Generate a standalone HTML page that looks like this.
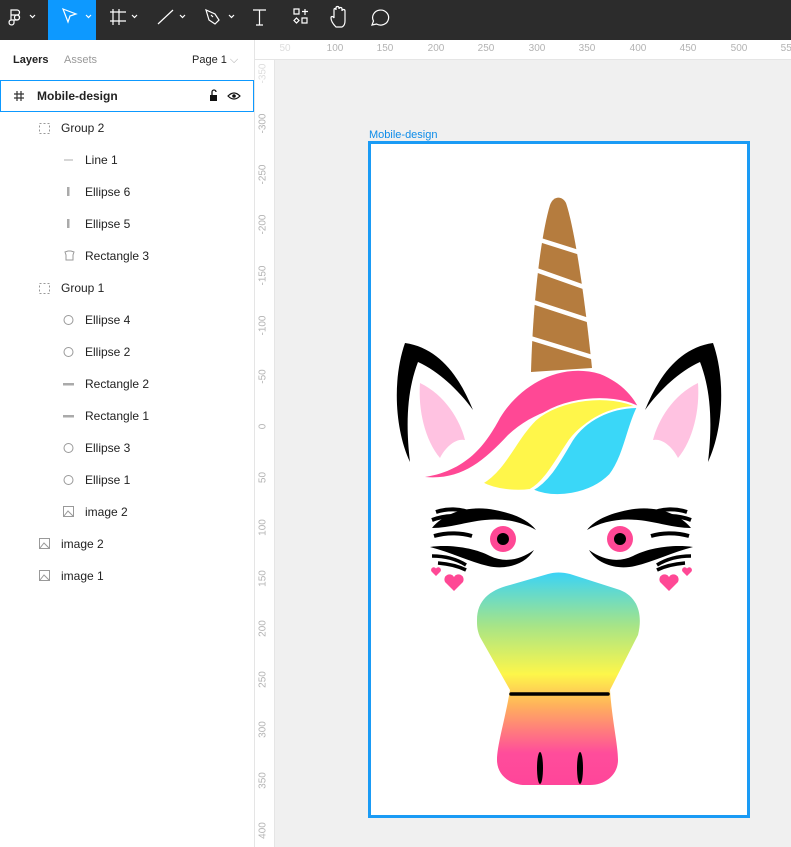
<!DOCTYPE html>
<html><head><meta charset="utf-8"><style>
*{margin:0;padding:0;box-sizing:border-box}
body{width:791px;height:847px;overflow:hidden;font-family:"Liberation Sans",sans-serif;background:#f0f0f0;position:relative}
.tb{position:absolute;left:0;top:0;width:791px;height:40px;background:#2c2c2c}
.panel{position:absolute;left:0;top:40px;width:255px;height:807px;background:#fff;border-right:1px solid #e5e5e5}
.t{position:absolute;font-size:12px;color:#222;white-space:nowrap}
.row{position:absolute;font-size:12px;color:#222;white-space:nowrap}
.hr{position:absolute;left:255px;top:40px;width:536px;height:20px;background:#fff;border-bottom:1px solid #e5e5e5}
.vr{position:absolute;left:255px;top:60px;width:20px;height:787px;background:#fff;border-right:1px solid #e5e5e5}
.hl{position:absolute;top:3px;font-size:10px;color:#b3b3b3;transform:translateX(-50%)}
.vl{position:absolute;left:2px;font-size:10px;color:#b3b3b3;transform:rotate(-90deg);transform-origin:center;width:30px;text-align:center;margin-left:-9px}
</style></head><body>
<div class="tb">
<svg width="791" height="40" style="position:absolute;left:0;top:0">
<rect x="48" y="0" width="48" height="40" fill="#0d99ff"/>
<g fill="none" stroke="#fff" stroke-width="1.2">
<path d="M11 10h6a2.5 2.5 0 0 1 0 5h-6zM11 15h6a2.5 2.5 0 0 1 0 5h-6zM11 20h3v3a2.5 2.5 0 1 1-3-3z"/>
<circle cx="17" cy="17.5" r="2.5"/>
<path d="M30 15l2.5 2.5 2.5-2.5M86 15l2.5 2.5 2.5-2.5M132 15l2.5 2.5 2.5-2.5M180 15l2.5 2.5 2.5-2.5M229 15l2.5 2.5 2.5-2.5"/>
<path d="M63 9l13 5-6 2-2 6z"/>
<path d="M113 9v16M119 9v16M110 12h16M110 21h16"/>
<path d="M158 24l15-14"/>
<path d="M206 10l3 10 6 4 4-4-4-6zM211 15l2 2"/>
<path d="M253 10h13M259.5 10v15M256 25h7"/>
<path d="M294 9h5v5h-5zM302 11.5h6M305 9v6M296.5 18l2.5 2.5-2.5 2.5-2.5-2.5zM302 18h5v5h-5z"/>
<path d="M336 27c-3-3-5-6-5-9 0-2 2-2 3 0v-8c0-2 2-2 2 0v-2c0-2 3-2 3 0v1c0-2 3-2 3 0v2c0-2 3-2 3 0v10c0 3-1 5-3 6z"/>
<path d="M372 25l1.5-4a8 7.5 0 1 1 3 3z"/>
</g>
</svg>
</div>
<div class="panel">
<div class="t" style="left:13px;top:14px;font-size:11px;font-weight:bold">Layers</div>
<div class="t" style="left:64px;top:14px;font-size:11px;color:#999">Assets</div>
<div class="t" style="left:192px;top:14px;font-size:11px">Page 1 <span style="color:#aaa">⌵</span></div>
<div style="position:absolute;left:0;top:40px;width:254px;height:32px;border:1px solid #0d99ff"></div>
</div>
<svg width="255" height="847" style="position:absolute;left:0;top:0">
<g fill="none" stroke="#333" stroke-width="1.2"><path d="M17 91v10M21 91v10M14 94h10M14 98h10"/></g>
<rect x="210" y="95" width="7" height="6" fill="#111"/><path d="M212 95v-3a2 2 0 0 1 4 0" stroke="#111" fill="none" stroke-width="1.3"/>
<path d="M228 96q6-6 12 0q-6 6-12 0z" stroke="#111" fill="none" stroke-width="1.2"/><circle cx="234" cy="96" r="1.8" fill="#111"/>
<g fill="none" stroke="#999" stroke-width="1" stroke-dasharray="2 2">
<rect x="39.5" y="123.5" width="10" height="10"/><rect x="39.5" y="283.5" width="10" height="10"/></g>
<path d="M64 160h9" stroke="#bbb" stroke-width="1.2"/>
<rect x="67" y="187" width="2.5" height="9" fill="#aaa"/><rect x="67" y="219" width="2.5" height="9" fill="#aaa"/>
<path d="M65 252l3-1h3l3 1-1 3v5h-7v-5z" fill="none" stroke="#999"/>
<g fill="none" stroke="#999"><circle cx="68.5" cy="320" r="4.5"/><circle cx="68.5" cy="352" r="4.5"/><circle cx="68.5" cy="448" r="4.5"/><circle cx="68.5" cy="480" r="4.5"/>
<rect x="63.5" y="506.5" width="10" height="10"/><rect x="39.5" y="538.5" width="10" height="10"/><rect x="39.5" y="570.5" width="10" height="10"/>
<path d="M64 516l4-5 5 5M40 548l4-5 5 5M40 580l4-5 5 5"/></g>
<rect x="63" y="383" width="11" height="2.5" fill="#aaa"/><rect x="63" y="415" width="11" height="2.5" fill="#aaa"/>
</svg>
<div class="row" style="left:37px;top:89px;font-weight:bold">Mobile-design</div>
<div class="row" style="left:61px;top:121px">Group 2</div>
<div class="row" style="left:85px;top:153px">Line 1</div>
<div class="row" style="left:85px;top:185px">Ellipse 6</div>
<div class="row" style="left:85px;top:217px">Ellipse 5</div>
<div class="row" style="left:85px;top:249px">Rectangle 3</div>
<div class="row" style="left:61px;top:281px">Group 1</div>
<div class="row" style="left:85px;top:313px">Ellipse 4</div>
<div class="row" style="left:85px;top:345px">Ellipse 2</div>
<div class="row" style="left:85px;top:377px">Rectangle 2</div>
<div class="row" style="left:85px;top:409px">Rectangle 1</div>
<div class="row" style="left:85px;top:441px">Ellipse 3</div>
<div class="row" style="left:85px;top:473px">Ellipse 1</div>
<div class="row" style="left:85px;top:505px">image 2</div>
<div class="row" style="left:61px;top:537px">image 2</div>
<div class="row" style="left:61px;top:569px">image 1</div>

<div class="hr">
<span class="hl" style="left:30px;color:#ddd">50</span><span class="hl" style="left:80px">100</span><span class="hl" style="left:130px">150</span><span class="hl" style="left:181px">200</span><span class="hl" style="left:231px">250</span><span class="hl" style="left:282px">300</span><span class="hl" style="left:332px">350</span><span class="hl" style="left:383px">400</span><span class="hl" style="left:433px">450</span><span class="hl" style="left:484px">500</span><span class="hl" style="left:534px">550</span>
</div>
<div class="vr">
<span class="vl" style="top:8px;color:#ddd">-350</span><span class="vl" style="top:58px">-300</span><span class="vl" style="top:109px">-250</span><span class="vl" style="top:159px">-200</span><span class="vl" style="top:210px">-150</span><span class="vl" style="top:260px">-100</span><span class="vl" style="top:311px">-50</span><span class="vl" style="top:361px">0</span><span class="vl" style="top:412px">50</span><span class="vl" style="top:462px">100</span><span class="vl" style="top:513px">150</span><span class="vl" style="top:563px">200</span><span class="vl" style="top:614px">250</span><span class="vl" style="top:664px">300</span><span class="vl" style="top:715px">350</span><span class="vl" style="top:765px">400</span>
</div>
<div style="position:absolute;left:369px;top:129px;font-size:11px;color:#0d8ce9">Mobile-design</div>
<div style="position:absolute;left:368px;top:141px;width:382px;height:677px;background:#fff;border:3px solid #1a9bf5"></div>
<svg width="791" height="847" style="position:absolute;left:0;top:0">
<defs><linearGradient id="g" x1="0" y1="572" x2="0" y2="785" gradientUnits="userSpaceOnUse">
<stop offset="0" stop-color="#3ad3f7"/><stop offset="0.25" stop-color="#a6e488"/><stop offset="0.48" stop-color="#fdf64a"/><stop offset="0.62" stop-color="#ffb45a"/><stop offset="0.85" stop-color="#ff4d9b"/><stop offset="1" stop-color="#ff459a"/></linearGradient></defs>
<path d="M550 205C553 196 562 195 566 203C575 230 585 300 592 368L531 372C533 300 541 235 550 205Z" fill="#b57c3e"/>
<g stroke="#fff" stroke-width="4.5"><path d="M540 240L578 252M536 270L584 287M533 302L588 320M530 338L592 357"/></g>
<g id="ear"><path d="M405 343C392 380 395 430 410 462C405 420 408 388 418 362C440 372 460 392 473 410C460 378 440 348 405 343Z" fill="#000"/>
<path d="M420 383C445 395 460 420 465 440C455 438 445 448 440 458C425 440 418 410 420 383Z" fill="#ffc2e1"/></g>
<use href="#ear" transform="translate(1118 0) scale(-1 1)"/>
<path d="M425 477C470 470 488 440 500 418C520 385 560 362 600 374C620 382 632 395 638 407C600 398 545 400 508 435C482 463 460 480 425 477Z" fill="#ff4895"/>
<path d="M482 483C505 470 515 440 535 420C560 398 610 393 638 407C610 410 585 420 570 440C555 462 545 482 530 490C515 492 495 490 482 483Z" fill="#fff64a" stroke="#fff" stroke-width="2"/>
<path d="M532 490C555 500 590 495 610 475C625 455 628 425 638 407C610 407 585 420 572 440C560 460 550 480 532 490Z" fill="#3ad7f8" stroke="#fff" stroke-width="2"/>
<g id="eye" fill="#000">
<path d="M432 528C445 512 470 505 495 510C515 514 528 520 536 530C522 522 505 518 485 520C465 522 450 528 432 528Z"/>
<path d="M432 520C445 515 460 515 470 518M436 512C448 508 460 509 468 512M434 536C448 532 462 533 472 536" stroke="#000" stroke-width="4" fill="none"/>
<path d="M430 547C450 544 475 548 490 556C505 563 520 560 534 550C525 565 505 570 488 566C470 562 450 552 430 547Z"/>
<path d="M432 556C446 556 458 560 466 565M438 563C450 564 460 567 466 570" stroke="#000" stroke-width="3.5" fill="none"/>
<circle cx="503" cy="539" r="13" fill="#ff4895"/><circle cx="503" cy="539" r="6"/>
<path d="M454 591l-9-9a4.5 4.5 0 0 1 9-5a4.5 4.5 0 0 1 9 5z" fill="#ff4895"/>
<path d="M436 576l-4.5-4.5a2.5 2.5 0 0 1 4.5-3a2.5 2.5 0 0 1 4.5 3z" fill="#ff4895"/>
</g>
<use href="#eye" transform="translate(1123 0) scale(-1 1)"/>
<path d="M477 620C477 600 490 590 510 585L548 574C555 572 562 572 570 574L620 590C638 597 643 615 638 635L610 690C612 720 618 745 618 760C618 775 605 785 590 785L525 785C510 785 497 775 497 760C497 745 505 720 510 690L480 637C477 630 477 625 477 620Z" fill="url(#g)"/>
<path d="M511 694H608" stroke="#000" stroke-width="3.5" stroke-linecap="round"/>
<ellipse cx="540" cy="768" rx="3" ry="16"/><ellipse cx="580" cy="768" rx="3" ry="16"/>
</svg>
</body></html>
